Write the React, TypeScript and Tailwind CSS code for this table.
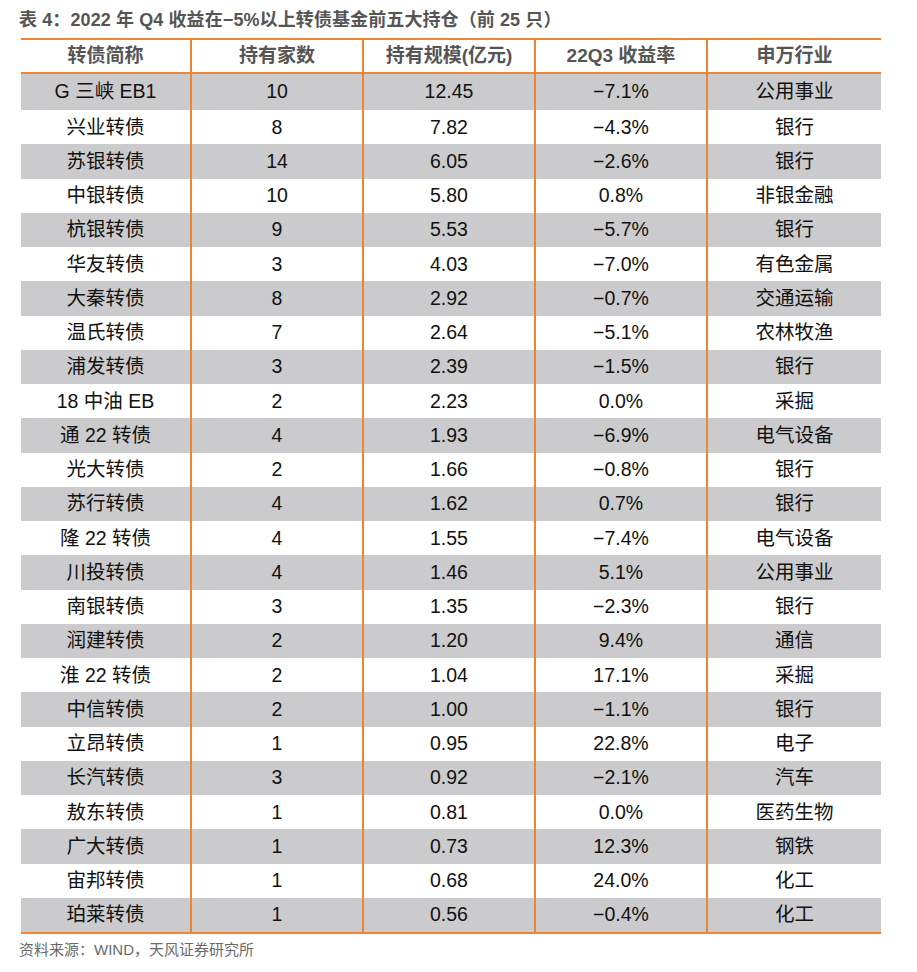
import React from "react";

const rows: [string, string, string, string, string][] = [
  ["G 三峡 EB1", "10", "12.45", "−7.1%", "公用事业"],
  ["兴业转债", "8", "7.82", "−4.3%", "银行"],
  ["苏银转债", "14", "6.05", "−2.6%", "银行"],
  ["中银转债", "10", "5.80", "0.8%", "非银金融"],
  ["杭银转债", "9", "5.53", "−5.7%", "银行"],
  ["华友转债", "3", "4.03", "−7.0%", "有色金属"],
  ["大秦转债", "8", "2.92", "−0.7%", "交通运输"],
  ["温氏转债", "7", "2.64", "−5.1%", "农林牧渔"],
  ["浦发转债", "3", "2.39", "−1.5%", "银行"],
  ["18 中油 EB", "2", "2.23", "0.0%", "采掘"],
  ["通 22 转债", "4", "1.93", "−6.9%", "电气设备"],
  ["光大转债", "2", "1.66", "−0.8%", "银行"],
  ["苏行转债", "4", "1.62", "0.7%", "银行"],
  ["隆 22 转债", "4", "1.55", "−7.4%", "电气设备"],
  ["川投转债", "4", "1.46", "5.1%", "公用事业"],
  ["南银转债", "3", "1.35", "−2.3%", "银行"],
  ["润建转债", "2", "1.20", "9.4%", "通信"],
  ["淮 22 转债", "2", "1.04", "17.1%", "采掘"],
  ["中信转债", "2", "1.00", "−1.1%", "银行"],
  ["立昂转债", "1", "0.95", "22.8%", "电子"],
  ["长汽转债", "3", "0.92", "−2.1%", "汽车"],
  ["敖东转债", "1", "0.81", "0.0%", "医药生物"],
  ["广大转债", "1", "0.73", "12.3%", "钢铁"],
  ["宙邦转债", "1", "0.68", "24.0%", "化工"],
  ["珀莱转债", "1", "0.56", "−0.4%", "化工"],
];

const headers = ["转债简称", "持有家数", "持有规模(亿元)", "22Q3 收益率", "申万行业"];

const font = { fontFamily: '"Liberation Sans", Arial, "Noto Sans CJK SC", sans-serif' };

export default function App() {
  return (
    <div className="w-[917px] h-[972px] bg-white relative" style={font}>
      <div className="h-[38px] pl-[19px] pt-[8px] text-[18px] font-bold text-[#555555] leading-[25px] tracking-[0.1px]">
        表 4：2022 年 Q4 收益在−5%以上转债基金前五大持仓（前 25 只）
      </div>
      <div className="ml-[21px] w-[860px] border-t-2 border-b-2 border-[#ef8533]">
        <div className="grid grid-cols-[171px_172px_172px_172px_173px] h-[34px] border-b-2 border-[#ef8533]">
          {headers.map((h, i) => (
            <div
              key={h}
              className={
                "flex items-center justify-center text-[19px] font-bold text-[#555555] " +
                (i < 4 ? "border-r-2 border-[#ef8533]" : "")
              }
            >
              {h}
            </div>
          ))}
        </div>
        {rows.map((r, ri) => (
          <div
            key={ri}
            className={
              "grid grid-cols-[171px_172px_172px_172px_173px] " +
              (ri === 0 ? "h-[36px] " : "h-[34.25px] ") +
              (ri % 2 === 0 ? "bg-[#cbcbcd]" : "bg-white")
            }
          >
            {r.map((c, ci) => (
              <div
                key={ci}
                className={
                  "flex items-center justify-center text-[19.5px] text-[#111111] " +
                  (ci < 4 ? "border-r-2 border-[#ef8533]" : "")
                }
              >
                {c}
              </div>
            ))}
          </div>
        ))}
      </div>
      <div className="pl-[19px] pt-[5px] text-[15px] text-[#6a6a6a] leading-[22px]">
        资料来源：WIND，天风证券研究所
      </div>
    </div>
  );
}
